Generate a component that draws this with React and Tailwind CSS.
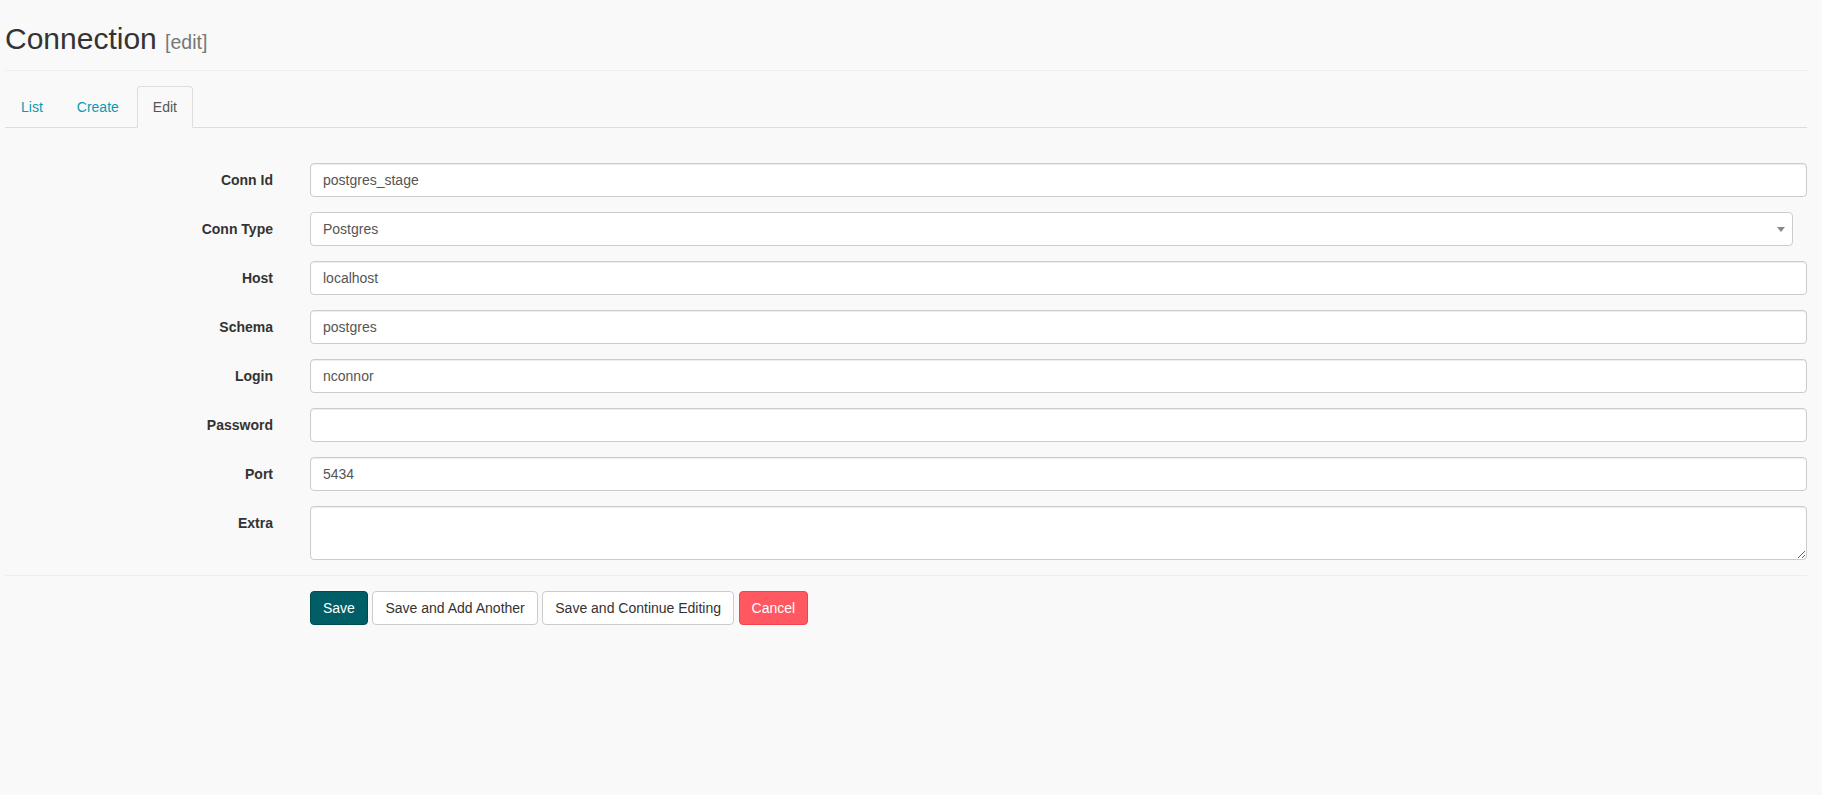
import React from "react";

const fields = [
  { label: "Conn Id", value: "postgres_stage" },
  { label: "Conn Type", value: "Postgres", select: true },
  { label: "Host", value: "localhost" },
  { label: "Schema", value: "postgres" },
  { label: "Login", value: "nconnor" },
  { label: "Password", value: "", type: "password" },
  { label: "Port", value: "5434" },
];

const inputCls =
  "block w-full h-[34px] px-[12px] py-[6px] text-[14px] leading-[20px] text-[#555] bg-white border border-[#ccc] rounded-[4px] shadow-[inset_0_1px_1px_rgba(0,0,0,0.075)] outline-none";

export default function App() {
  return (
    <div
      className="min-h-[795px] bg-[#f9f9f9] pl-[5px] pr-[15px] text-[14px] leading-[20px] text-[#333]"
      style={{ fontFamily: '"Liberation Sans", Arial, Helvetica, sans-serif' }}
    >
      <div className="pt-[22px] pb-[11px] border-b border-[#eee]">
        <h2 className="m-0 text-[30px] leading-[33px] font-normal text-[#333]">
          Connection <span className="text-[19.5px] text-[#777]">[edit]</span>
        </h2>
      </div>

      <ul className="mt-[15px] flex border-b border-[#ddd]">
        <li className="-mb-px mr-[2px]">
          <a className="block px-[15px] py-[10px] leading-[20px] border border-transparent rounded-t-[4px] text-[#0a9bb4]">
            List
          </a>
        </li>
        <li className="-mb-px mr-[2px]">
          <a className="block px-[15px] py-[10px] leading-[20px] border border-transparent rounded-t-[4px] text-[#0a9bb4]">
            Create
          </a>
        </li>
        <li className="-mb-px mr-[2px]">
          <a className="block px-[15px] py-[10px] leading-[20px] border border-[#ddd] border-b-transparent rounded-t-[4px] bg-[#f9f9f9] text-[#555]">
            Edit
          </a>
        </li>
      </ul>

      <form className="mt-[35px] flex flex-col gap-[15px]" onSubmit={(e) => e.preventDefault()}>
        {fields.map((f) => (
          <div key={f.label} className="flex items-start">
            <label className="w-[268px] shrink-0 text-right font-bold pt-[7px] leading-[20px]">
              {f.label}
            </label>
            <div className="ml-[37px] flex-1">
              {f.select ? (
                <div className="relative mr-[14px] h-[34px] bg-white border border-[#ccc] rounded-[4px] flex items-center px-[12px] text-[#555]">
                  <span>{f.value}</span>
                  <span className="absolute right-[7px] top-[14px] w-0 h-0 border-l-[4px] border-r-[4px] border-t-[5px] border-l-transparent border-r-transparent border-t-[#888]" />
                </div>
              ) : (
                <input
                  className={inputCls}
                  type={f.type || "text"}
                  defaultValue={f.value}
                  style={{ fontFamily: '"Liberation Sans", Arial, sans-serif' }}
                />
              )}
            </div>
          </div>
        ))}
        <div className="flex items-start">
          <label className="w-[268px] shrink-0 text-right font-bold pt-[7px] leading-[20px]">
            Extra
          </label>
          <div className="ml-[37px] flex-1">
            <textarea
              className="block w-full h-[54px] px-[12px] py-[6px] text-[14px] text-[#555] bg-white border border-[#ccc] rounded-[4px] shadow-[inset_0_1px_1px_rgba(0,0,0,0.075)] outline-none"
              style={{ fontFamily: '"Liberation Sans", Arial, sans-serif' }}
            />
          </div>
        </div>
      </form>

      <div className="mt-[15px] border-t border-[#eee] pt-[15px] pl-[305px] flex gap-[4.5px]">
        <button className="h-[34px] px-[12px] border border-[#004a50] bg-[#005f66] text-white rounded-[4px] text-[14px]">
          Save
        </button>
        <button className="h-[34px] px-[12px] border border-[#ccc] bg-white text-[#333] rounded-[4px] text-[14px]">
          Save and Add Another
        </button>
        <button className="h-[34px] px-[12px] border border-[#ccc] bg-white text-[#333] rounded-[4px] text-[14px]">
          Save and Continue Editing
        </button>
        <button className="h-[34px] px-[12px] border border-[#f4434c] bg-[#ff5861] text-white rounded-[4px] text-[14px]">
          Cancel
        </button>
      </div>
    </div>
  );
}
